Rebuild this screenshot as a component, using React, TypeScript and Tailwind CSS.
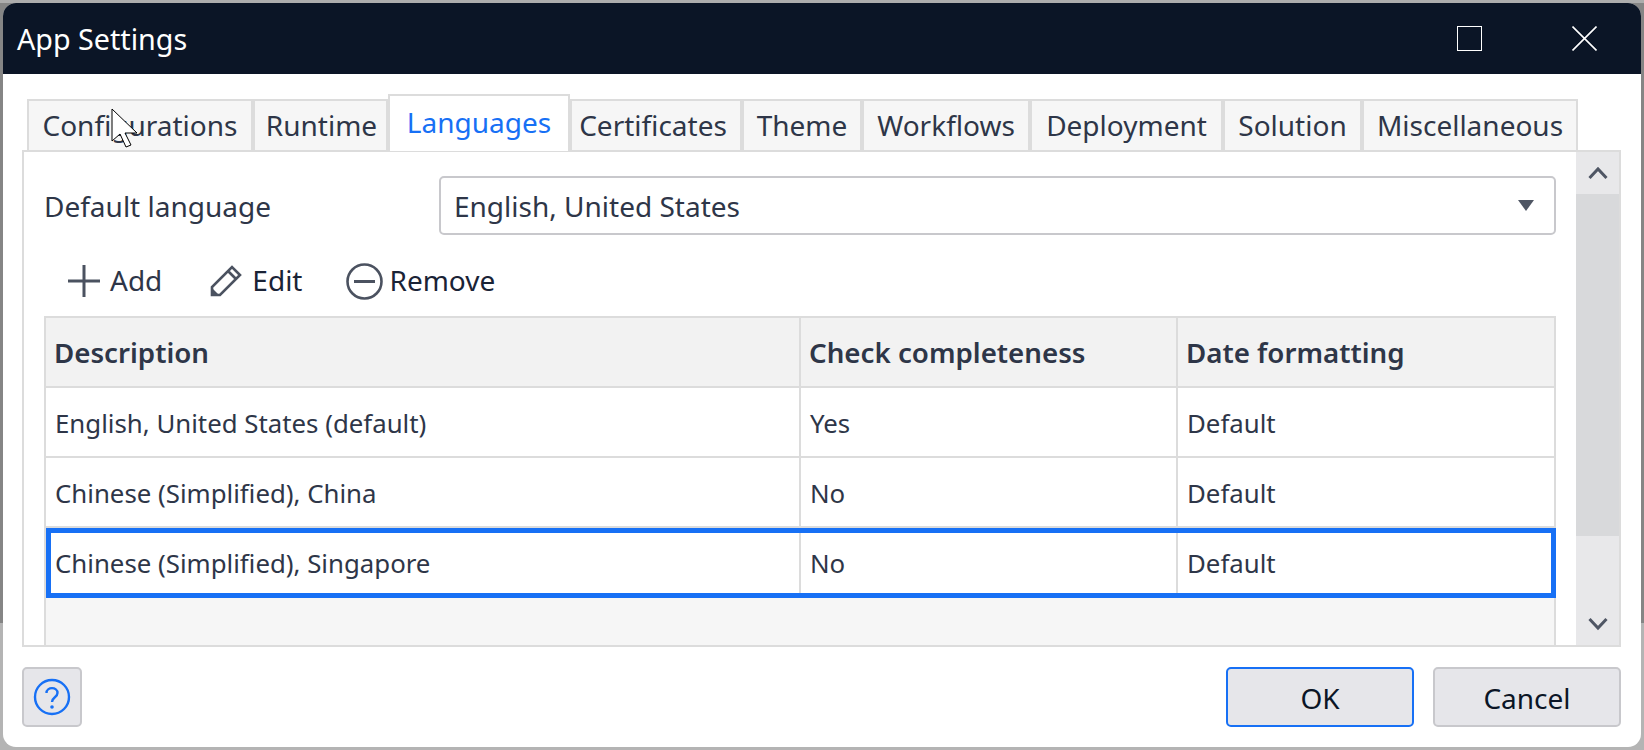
const tabs = [
  { label: "Configurations", w: "w-[226px] pb-[2px]" },
  { label: "Runtime", w: "w-[135px] pb-[2px] pl-[2px]" },
  { label: "Languages", w: "w-[182px]", active: true },
  { label: "Certificates", w: "w-[172px] pb-[2px] pr-[6px]" },
  { label: "Theme", w: "w-[120px] pb-[2px]" },
  { label: "Workflows", w: "w-[168px] pb-[2px]" },
  { label: "Deployment", w: "w-[193px] pb-[2px]" },
  { label: "Solution", w: "w-[139px] pb-[2px]" },
  { label: "Miscellaneous", w: "w-[216px] pb-[2px]" },
];

const rows = [
  ["English, United States (default)", "Yes", "Default"],
  ["Chinese (Simplified), China", "No", "Default"],
];

function Tab({ label, w, active }: { label: string; w: string; active?: boolean }) {
  if (active) {
    return (
      <div className={`${w} relative z-10 h-[57px] border-2 border-b-0 border-[#dcdcdc] bg-white flex items-center justify-center pb-[3px] text-[#1770f5]`}>
        {label}
      </div>
    );
  }
  return (
    <div className={`${w} mt-[5px] h-[52px] border-2 border-b-0 border-[#dcdcdc] bg-[#f6f6f6] flex items-center justify-center text-[#2e3648]`}>
      {label}
    </div>
  );
}

function Cell({ className, children }: { className: string; children: string }) {
  return <div className={`${className} flex items-center`}>{children}</div>;
}

export default function App() {
  return (
    <div className="w-[1644px] h-[750px] pl-[3px] pr-[3px] pt-[3px] pb-[3px] overflow-hidden bg-[linear-gradient(#adadad_0,#adadad_3px,#858585_3px,#858585_623px,#b4b4b4_623px)] font-['Noto_Sans',sans-serif] text-[28px] leading-none relative">
      <div className="w-full h-full bg-white rounded-[13px] overflow-hidden flex flex-col">
        <div className="h-[71px] shrink-0 bg-[#0b1526] text-white flex items-center pl-[14px]">
          <span className="flex-1 text-[28.7px] pt-[2px]">App Settings</span>
          <div className="w-[25px] h-[25px] border-[1.5px] border-white mr-[90px]" />
          <svg width="25" height="25" viewBox="0 0 25 25" className="mr-[44px]">
            <path d="M0.5 0.5L24.5 24.5M24.5 0.5L0.5 24.5" stroke="white" strokeWidth="1.6" fill="none" />
          </svg>
        </div>

        <div className="flex-1 flex flex-col pl-[19px] pr-[19px] pt-[20px] min-h-0">
          <div className="flex pl-[5px] h-[57px] shrink-0 -mb-[1px] w-[1599px]">
            {tabs.map((t) => (
              <Tab key={t.label} {...t} />
            ))}
          </div>

          <div className="h-[497px] shrink-0 w-[1599px] border-2 border-[#dcdcdc] flex text-[#2e3648] overflow-hidden">
            <div className="flex-1 min-w-0 pl-[20px] pr-[20px] pt-[24px] flex flex-col">
              <div className="flex items-center h-[59px] shrink-0">
                <span className="w-[395px] pt-[1px]">Default language</span>
                <div className="flex-1 h-[59px] border-2 border-[#c8c8cc] rounded-[5px] flex items-center pl-[13px] pr-[20px]">
                  <span className="flex-1 pt-[1px]">English, United States</span>
                  <svg width="16" height="11" viewBox="0 0 16 11">
                    <path d="M0 0H16L8 11Z" fill="#4f5664" />
                  </svg>
                </div>
              </div>

              <div className="h-[81px] shrink-0 flex items-center pt-[11px] text-[#1a2336]">
                <svg width="32" height="32" viewBox="0 0 32 32" className="ml-[24px]">
                  <path d="M16 0V32M0 16H32" stroke="#4b5260" strokeWidth="3" fill="none" />
                </svg>
                <span className="ml-[10px] pb-[2px] text-[#2e3648]">Add</span>
                <svg width="32" height="32" viewBox="0 0 32 32" className="ml-[48px]">
                  <path d="M2 30V22L22 2L30 10L10 30Z M18 6L26 14" stroke="#4b5260" strokeWidth="2.6" fill="none" />
                  <path d="M2 30V23L9 30Z" fill="#4b5260" />
                </svg>
                <span className="ml-[10px] pb-[2px]">Edit</span>
                <svg width="37" height="37" viewBox="0 0 37 37" className="ml-[44px]">
                  <circle cx="18.5" cy="18.5" r="17" stroke="#4b5260" strokeWidth="2.6" fill="none" />
                  <path d="M8 18.5H29" stroke="#4b5260" strokeWidth="3" fill="none" />
                </svg>
                <span className="ml-[6px] pb-[2px]">Remove</span>
              </div>

              <div className="flex-1 min-h-0 border-2 border-b-0 border-[#dcdcdc] bg-[#f6f6f6] flex flex-col">
                <div className="h-[70px] shrink-0 flex bg-[#f2f2f2] border-b-2 border-[#dcdcdc] font-semibold text-[27.7px]">
                  <Cell className="w-[755px] border-r-2 border-[#dcdcdc] pl-[8px] pt-[1px]">Description</Cell>
                  <Cell className="w-[377px] border-r-2 border-[#dcdcdc] pl-[8px] pt-[1px]">Check completeness</Cell>
                  <Cell className="flex-1 pl-[8px] pt-[1px]">Date formatting</Cell>
                </div>
                {rows.map((r) => (
                  <div key={r[0]} className="h-[70px] shrink-0 flex bg-white border-b-2 border-[#dcdcdc] text-[25.8px]">
                    <Cell className="w-[755px] border-r-2 border-[#dcdcdc] pl-[9px] pt-[4px]">{r[0]}</Cell>
                    <Cell className="w-[377px] border-r-2 border-[#dcdcdc] pl-[9px] pt-[4px]">{r[1]}</Cell>
                    <Cell className="flex-1 pl-[9px] pt-[4px]">{r[2]}</Cell>
                  </div>
                ))}
                <div className="h-[70px] shrink-0 flex bg-white border-[5px] border-[#1770f5] w-[1510px] text-[25.8px]">
                  <Cell className="w-[750px] border-r-2 border-[#dcdcdc] pl-[4px] pt-[1px]">Chinese (Simplified), Singapore</Cell>
                  <Cell className="w-[377px] border-r-2 border-[#dcdcdc] pl-[9px] pt-[1px]">No</Cell>
                  <Cell className="flex-1 pl-[9px] pt-[1px]">Default</Cell>
                </div>
              </div>
            </div>

            <div className="w-[43px] shrink-0 bg-[#e8e8ea] flex flex-col">
              <div className="h-[42px] bg-[#e8e8ea] flex items-center justify-center">
                <svg width="20" height="14" viewBox="0 0 20 14">
                  <path d="M1.5 12L10 3L18.5 12" stroke="#4f5664" strokeWidth="3" fill="none" />
                </svg>
              </div>
              <div className="h-[342px] bg-[#d8d9db]" />
              <div className="flex-1 flex items-end justify-center pb-[14px]">
                <svg width="20" height="14" viewBox="0 0 20 14">
                  <path d="M1.5 2L10 11L18.5 2" stroke="#4f5664" strokeWidth="3" fill="none" />
                </svg>
              </div>
            </div>
          </div>

          <div className="flex items-center mt-[20px] h-[60px] shrink-0 text-[#0b1526]">
            <button className="w-[60px] h-[60px] rounded-[5px] bg-[#e6e6ea] border-2 border-[#c8c8cc] flex items-center justify-center">
              <svg width="38" height="38" viewBox="0 0 38 38">
                <circle cx="19" cy="19" r="17" stroke="#1770f5" strokeWidth="2.4" fill="none" />
                <path d="M13.5 15C13.5 8.5 24.5 8.5 24.5 15C24.5 19.5 19 19 19 24" stroke="#1770f5" strokeWidth="2.4" fill="none" />
                <circle cx="19" cy="29" r="1.8" fill="#1770f5" />
              </svg>
            </button>
            <button className="ml-auto w-[188px] h-[60px] rounded-[5px] bg-[#e6e6ea] border-2 border-[#1770f5] pt-[1px]">OK</button>
            <button className="ml-[19px] mr-[1px] w-[188px] h-[60px] rounded-[5px] bg-[#e6e6ea] border-2 border-[#c8c8cc] pt-[1px]">Cancel</button>
          </div>
        </div>
      </div>

      <svg width="30" height="42" viewBox="0 0 30 42" className="absolute left-[111px] top-[108px]">
        <path d="M1 1V33L9 26L15 39L20 37L14 25H26Z" fill="white" stroke="black" strokeWidth="1" />
      </svg>
    </div>
  );
}
